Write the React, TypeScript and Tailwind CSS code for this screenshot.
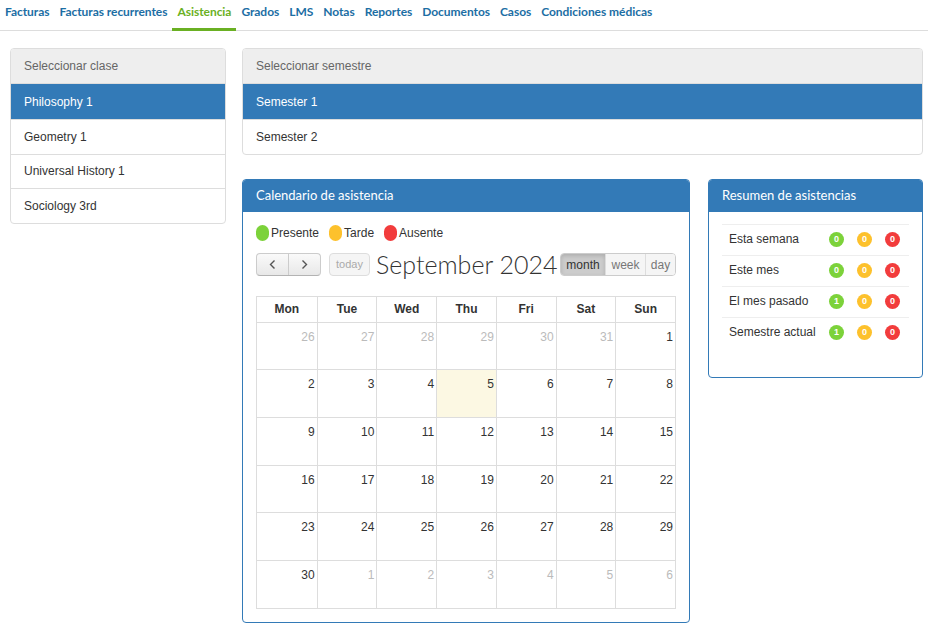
import React from 'react';

const navItems = [
  'Facturas',
  'Facturas recurrentes',
  'Asistencia',
  'Grados',
  'LMS',
  'Notas',
  'Reportes',
  'Documentos',
  'Casos',
  'Condiciones médicas',
];

const classes = ['Philosophy 1', 'Geometry 1', 'Universal History 1', 'Sociology 3rd'];
const semesters = ['Semester 1', 'Semester 2'];
const weekDays = ['Mon', 'Tue', 'Wed', 'Thu', 'Fri', 'Sat', 'Sun'];

type Day = { n: number; other: boolean; today?: boolean };

const weeks: Day[][] = [
  [26, 27, 28, 29, 30, 31].map((n) => ({ n, other: true })).concat([{ n: 1, other: false }]),
  [2, 3, 4, 5, 6, 7, 8].map((n) => ({ n, other: false, today: n === 5 })),
  [9, 10, 11, 12, 13, 14, 15].map((n) => ({ n, other: false })),
  [16, 17, 18, 19, 20, 21, 22].map((n) => ({ n, other: false })),
  [23, 24, 25, 26, 27, 28, 29].map((n) => ({ n, other: false })),
  [{ n: 30, other: false }].concat([1, 2, 3, 4, 5, 6].map((n) => ({ n, other: true }))),
];

const summary = [
  { label: 'Esta semana', p: 0, t: 0, a: 0 },
  { label: 'Este mes', p: 0, t: 0, a: 0 },
  { label: 'El mes pasado', p: 1, t: 0, a: 0 },
  { label: 'Semestre actual', p: 1, t: 0, a: 0 },
];

const Badge: React.FC<{ value: number; color: string }> = ({ value, color }) => (
  <span
    className={`inline-flex h-[15px] w-[15px] items-center justify-center rounded-full text-[9px] font-bold leading-none text-white ${color}`}
  >
    {value}
  </span>
);

const SelectPanel: React.FC<{ title: string; items: string[] }> = ({ title, items }) => (
  <div className="overflow-hidden rounded-[4px] border border-[#ddd] bg-white text-[12px]">
    <div className="flex h-[35px] items-center border-b border-[#ddd] bg-[#eeeeee] px-[13px] text-[#666]">
      {title}
    </div>
    {items.map((item, i) => (
      <div
        key={item}
        className={`flex items-center px-[13px] ${
          i === 0 ? 'h-[35px] bg-[#337ab7] text-white' : 'h-[34.5px] border-t border-[#ddd] text-[#333]'
        }`}
      >
        {item}
      </div>
    ))}
  </div>
);

export default function App() {
  return (
    <div className="min-h-[623px] bg-white" style={{ fontFamily: '"Liberation Sans", Arial, sans-serif' }}>
      {/* Tabs */}
      <div className="flex h-[31px] border-b border-[#ddd]" style={{ fontFamily: 'Lato, sans-serif' }}>
        {navItems.map((item) => {
          const active = item === 'Asistencia';
          return (
            <div
              key={item}
              className={`-mb-px flex h-[31px] items-start whitespace-nowrap px-[5px] pt-[3px] text-[12px] font-bold tracking-[-0.05px] ${
                active ? 'border-b-[3px] border-[#6ab023] text-[#6ab023]' : 'text-[#1c6ea4]'
              }`}
            >
              {item}
            </div>
          );
        })}
      </div>

      <div className="flex gap-4 pl-[10px] pr-[5px] pt-[17px]">
        {/* Class list */}
        <div className="w-[216px] shrink-0">
          <SelectPanel title="Seleccionar clase" items={classes} />
        </div>

        <div className="flex min-w-0 flex-1 flex-col gap-[24px]">
          <SelectPanel title="Seleccionar semestre" items={semesters} />

          <div className="flex items-start gap-[18px]">
            {/* Calendar */}
            <div className="w-[448px] shrink-0 overflow-hidden rounded-[4px] border border-[#337ab7] bg-white">
              <div
                className="flex h-[32px] items-center bg-[#337ab7] px-[13px] text-[13px] text-white"
                style={{ fontFamily: 'Lato, sans-serif' }}
              >
                Calendario de asistencia
              </div>
              <div className="px-[13px] pb-[13px] pt-[12px]">
                <div className="flex items-center gap-[10px] text-[12px] text-[#333]">
                  <span className="flex items-center gap-[2px]">
                    <span className="inline-block h-[16px] w-[13px] rounded-full bg-[#7cd23a]" />
                    Presente
                  </span>
                  <span className="flex items-center gap-[2px]">
                    <span className="inline-block h-[16px] w-[13px] rounded-full bg-[#fdc12c]" />
                    Tarde
                  </span>
                  <span className="flex items-center gap-[2px]">
                    <span className="inline-block h-[16px] w-[13px] rounded-full bg-[#f23c3c]" />
                    Ausente
                  </span>
                </div>

                {/* Toolbar */}
                <div className="mt-[11px] flex h-[24px] items-center">
                  <div className="flex h-[23px] shrink-0 overflow-hidden rounded-[4px] border border-[#ccc] border-b-[#b3b3b3] bg-gradient-to-b from-[#fafafa] to-[#e8e8e8]">
                    <div className="flex w-[31px] items-center justify-center text-[#333]">
                      <svg width="9" height="11" viewBox="0 0 9 11" fill="none" stroke="#555" strokeWidth="1.4">
                        <path d="M6.5 1.5 L2.5 5.5 L6.5 9.5" />
                      </svg>
                    </div>
                    <div className="flex w-[32px] items-center justify-center border-l border-[#ccc]">
                      <svg width="9" height="11" viewBox="0 0 9 11" fill="none" stroke="#555" strokeWidth="1.4">
                        <path d="M2.5 1.5 L6.5 5.5 L2.5 9.5" />
                      </svg>
                    </div>
                  </div>
                  <div className="ml-[8px] flex h-[23px] w-[41px] shrink-0 items-center justify-center rounded-[4px] border border-[#ddd] bg-[#f5f5f5] text-[11px] text-[#aaa]">
                    today
                  </div>
                  <div
                    className="ml-[6px] shrink-0 whitespace-nowrap text-[25px] font-light leading-none text-[#333]"
                    style={{ fontFamily: 'Lato, sans-serif' }}
                  >
                    September 2024
                  </div>
                  <div className="ml-auto flex h-[23px] shrink-0 overflow-hidden rounded-[4px] border border-[#ccc] text-[12px]">
                    <div className="flex w-[44px] items-center justify-center bg-[#cccccc] text-[#333] shadow-[inset_0_2px_4px_rgba(0,0,0,0.15)]">
                      month
                    </div>
                    <div className="flex w-[40px] items-center justify-center border-l border-[#ddd] bg-[#f5f5f5] text-[#777]">
                      week
                    </div>
                    <div className="flex w-[30px] items-center justify-center border-l border-[#ddd] bg-[#f5f5f5] text-[#777]">
                      day
                    </div>
                  </div>
                </div>

                {/* Month grid */}
                <div className="mt-[19px] border border-[#ddd] text-[12px]">
                  <div className="grid h-[25px] grid-cols-7">
                    {weekDays.map((d, i) => (
                      <div
                        key={d}
                        className={`flex items-center justify-center font-semibold text-[#333] ${i > 0 ? 'border-l border-[#ddd]' : ''}`}
                      >
                        {d}
                      </div>
                    ))}
                  </div>
                  {weeks.map((week, wi) => (
                    <div key={wi} className="grid h-[47.7px] grid-cols-7 border-t border-[#ddd]">
                      {week.map((day, di) => (
                        <div
                          key={di}
                          className={`px-[2px] pt-[5px] text-right ${di > 0 ? 'border-l border-[#ddd]' : ''} ${
                            day.today ? 'bg-[#fcf8e3]' : ''
                          } ${day.other ? 'text-[#bbb]' : 'text-[#333]'}`}
                        >
                          {day.n}
                        </div>
                      ))}
                    </div>
                  ))}
                </div>
              </div>
            </div>

            {/* Summary */}
            <div className="min-w-0 flex-1 overflow-hidden rounded-[4px] border border-[#337ab7] bg-white">
              <div
                className="flex h-[32px] items-center bg-[#337ab7] px-[13px] text-[13px] text-white"
                style={{ fontFamily: 'Lato, sans-serif' }}
              >
                Resumen de asistencias
              </div>
              <div className="px-[13px] pb-[29px] pt-[12px]">
                {summary.map((row) => (
                  <div
                    key={row.label}
                    className="flex h-[31px] items-center border-t border-[#eee] pl-[7px] text-[12px] text-[#333]"
                  >
                    <span className="w-[100px] pb-[1px]">{row.label}</span>
                    <div className="flex items-center gap-[13px]">
                      <Badge value={row.p} color="bg-[#7cd23a]" />
                      <Badge value={row.t} color="bg-[#fdc12c]" />
                      <Badge value={row.a} color="bg-[#f23c3c]" />
                    </div>
                  </div>
                ))}
              </div>
            </div>
          </div>
        </div>
      </div>
    </div>
  );
}
